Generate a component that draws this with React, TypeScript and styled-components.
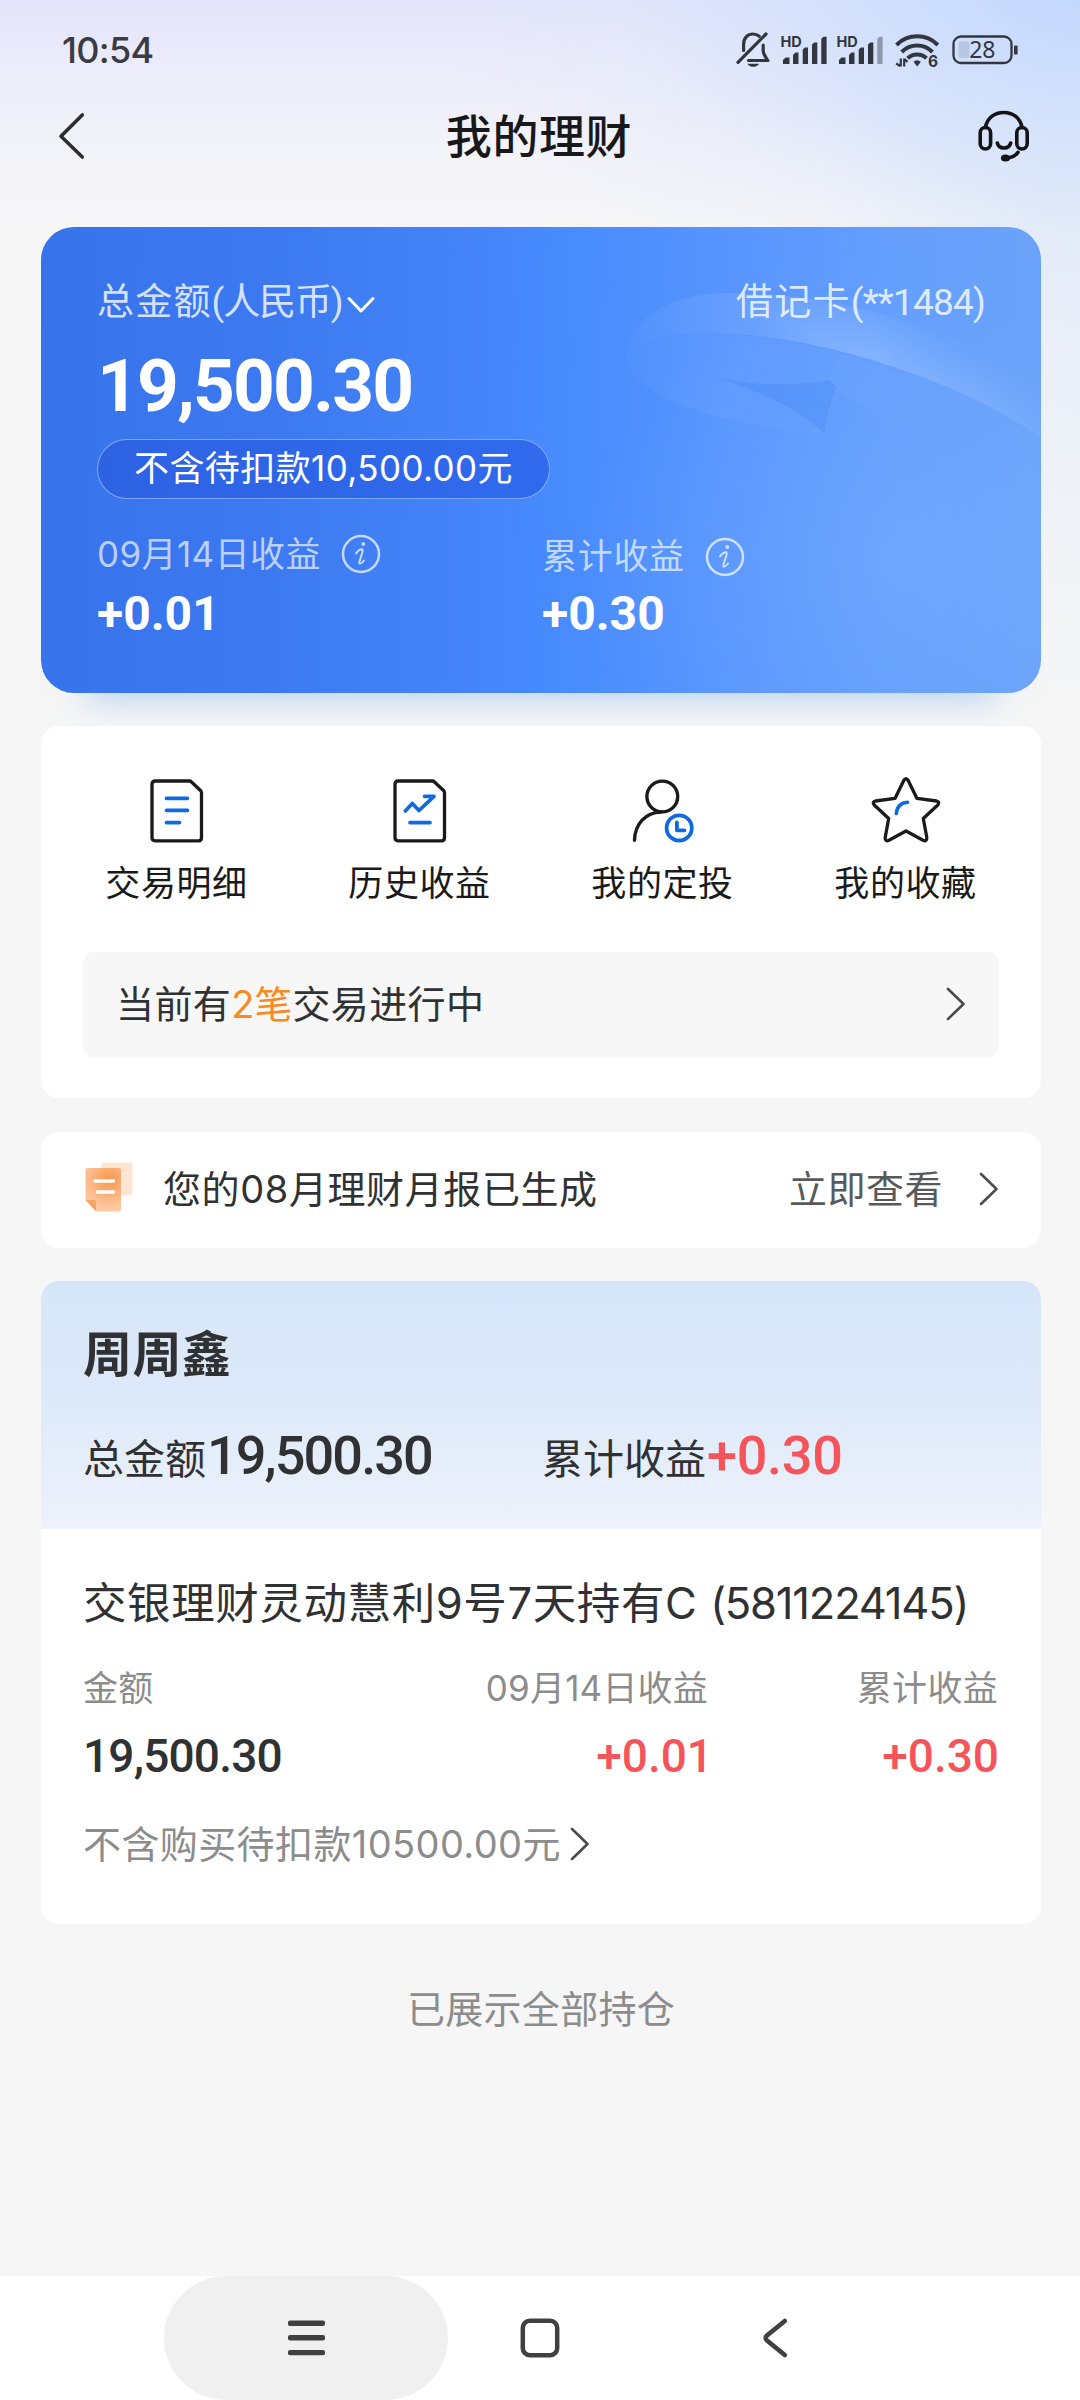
import React from 'react';
import styled, { createGlobalStyle } from 'styled-components';

const GlobalStyle = createGlobalStyle`
  *, *::before, *::after { box-sizing: border-box; }
  body {
    margin: 0;
    background: #f6f6f6;
    font-family: Inter, "Noto Sans CJK SC", sans-serif;
    color: #303133;
  }
  svg { display: block; flex: none; overflow: visible; }
`;

const Page = styled.div`
  width: 1080px;
  height: 2400px;
  display: flex;
  flex-direction: column;
  overflow: hidden;
  background:
    radial-gradient(ellipse 640px 330px at 1080px -10px, rgba(194, 215, 254, 0.95) 0%, rgba(204, 221, 252, 0.72) 35%, rgba(222, 231, 248, 0.35) 72%, rgba(240, 243, 248, 0) 100%),
    radial-gradient(ellipse 260px 620px at 1080px 100px, rgba(222, 232, 249, 0.9) 0%, rgba(246, 246, 248, 0) 100%),
    linear-gradient(180deg, #e3e4fb 0px, #ebebfa 60px, #f2f2f9 140px, #f6f6f8 215px, #f6f6f6 320px);
`;

const Text = styled.span<{
  $size: number;
  $color?: string;
  $weight?: number;
  $spacing?: number;
  $line?: number;
}>`
  font-size: ${p => p.$size}px;
  font-weight: ${p => p.$weight ?? 400};
  letter-spacing: ${p => p.$spacing ?? 0}px;
  line-height: ${p => (p.$line ? `${p.$line}px` : 1)};
  color: ${p => p.$color ?? 'inherit'};
  white-space: nowrap;
`;

const Figures = styled(Text)<{ $hang?: number }>`
  font-family: Roboto, "Noto Sans CJK SC", sans-serif;
  margin-right: ${p => -(p.$hang ?? 0)}px;
`;

/* ---------- status bar and title ---------- */

const StatusBar = styled.div`
  height: 100px;
  padding: 0 62px;
  display: flex;
  align-items: center;
  justify-content: space-between;
  color: #3a3b44;
`;

const StatusIcons = styled.div`
  display: flex;
  align-items: center;
`;

const StatusItem = styled.div<{ $gap: number }>`
  margin-left: ${p => p.$gap}px;
`;

const Header = styled.header`
  height: 72px;
  padding: 0 51px 0 58px;
  display: grid;
  grid-template-columns: 54px 1fr 52px;
  align-items: center;
`;

const PageTitle = styled.div`
  padding-right: 11px;
  padding-bottom: 1px;
  text-align: center;
`;

const BellOff = () => (
  <svg width="34" height="37" viewBox="0 0 34 37" fill="none" stroke="#31363f" strokeWidth="3.2" strokeLinecap="round" strokeLinejoin="round">
    <path d="M2 30.3L30 2" />
    <path d="M7.6 18.5v-6C7.6 6 11.5 2 17 2c2.700 0 4.600.8 6.200 2.200" />
    <path d="M27.200 13.200V19c0 3.500 2.300 5.600 4.600 9.500H12.500" />
    <path d="M11.500 31.700h11.500c-2 4.200-9.500 4.200-11.500 0z" fill="#31363f" stroke="none" />
  </svg>
);

const Signal = ({ weak }: { weak?: boolean }) => (
  <svg width="47" height="30" viewBox="0 0 47 30" fill="#31363f">
    <text x="-0.500" y="11.500" fontSize="14.500" fontWeight="700" fontFamily="Inter, sans-serif">HD</text>
    <path d="M2 29v-4l2.500-2.500h4V29z" />
    <path d="M12 29V20l2.500-2.500h3V29z" />
    <path d="M21.700 29V14.500l2.300-2h3V29z" />
    <path d="M31 29V9.500l2.300-2h3V29z" />
    <path d="M40.300 29V3.800l2.300-2h3V29z" opacity={weak ? 0.42 : 1} />
  </svg>
);

const Wifi = () => (
  <svg width="44" height="35" viewBox="0 0 44 35" fill="none" stroke="#31363f" strokeWidth="4">
    <path d="M1.500 12A29 29 0 0 1 42.800 12" />
    <path d="M6.700 19A21.500 21.500 0 0 1 37.500 19" />
    <path d="M12.700 25.300A13.500 13.500 0 0 1 31.500 25.300" />
    <path d="M18.500 28.800q3.700-3 7.400 0L22.200 33.500z" fill="#31363f" stroke="none" />
    <path d="M5.800 25.500v8M1.200 30.500l4 2.500M9.200 33.500v-8M9.500 26l3 3" strokeWidth="2.200" />
    <text x="33" y="33.500" fontSize="15.500" fontWeight="700" fontFamily="Inter, sans-serif" fill="#31363f" stroke="none">6</text>
  </svg>
);

const Battery = () => (
  <svg width="66" height="30" viewBox="0 0 66 30" fill="none">
    <rect x="1.500" y="1.500" width="58" height="26.500" rx="7.500" stroke="#31363f" strokeWidth="2.300" />
    <rect x="6.500" y="6.500" width="11" height="16.500" rx="2.500" fill="#b7c6e2" />
    <rect x="62" y="10.500" width="3.600" height="9" rx="1" fill="#31363f" />
    <text x="30.300" y="22.800" fontSize="23" textAnchor="middle" fontFamily="Noto Sans, sans-serif" fill="#31363f">28</text>
  </svg>
);

const BackIcon = () => (
  <svg width="27" height="46" viewBox="0 0 27 46" fill="none" stroke="#2d2d30" strokeWidth="3.600" strokeLinecap="round" strokeLinejoin="round">
    <path d="M24.300 2L3 23.200L24.300 44" />
  </svg>
);

const Headset = () => (
  <svg width="52" height="52" viewBox="0 0 52 52" fill="none" stroke="#141416" strokeWidth="3.600" strokeLinecap="round">
    <path d="M8.500 17.500C10 8 17.500 2.500 26.700 2.500S43.500 8 45 17.500" />
    <rect x="3.200" y="17.500" width="10.400" height="21.500" rx="5.200" />
    <rect x="39.800" y="17.500" width="10.400" height="21.500" rx="5.200" />
    <path d="M20.300 33c1.600 6.600 11.800 6.600 13.400 0" />
    <path d="M41 42.300c-1.800 3-5 4.700-9 5.500" />
    <ellipse cx="28.500" cy="48" rx="2.800" ry="1.800" fill="#141416" />
  </svg>
);

/* ---------- balance card ---------- */

const Content = styled.main`
  flex: 1;
  padding: 55px 39px 0 41px;
  display: flex;
  flex-direction: column;
`;

const BalanceCard = styled.section`
  position: relative;
  height: 466px;
  padding: 51px 56px 0 56px;
  border-radius: 33px;
  background:
    radial-gradient(ellipse 330px 260px at 860px 330px, rgba(120, 176, 255, 0.4), rgba(120, 176, 255, 0) 100%),
    linear-gradient(91deg, #3773ea 0%, #3c79f0 22%, #4382f7 40%, #478bfd 52%, #5794fe 68%, #649ffd 84%, #6ba3f9 100%);
  box-shadow: 0 52px 32px -46px rgba(120, 172, 240, 0.5);
  color: #fff;
`;

const CardArt = styled.svg`
  position: absolute;
  left: 0;
  top: 0;
  border-radius: 33px;
`;

const CardBody = styled.div`
  position: relative;
  display: flex;
  flex-direction: column;
  align-items: flex-start;
`;

const CardTop = styled.div`
  width: 100%;
  height: 50px;
  display: flex;
  align-items: center;
  justify-content: space-between;
`;

const Currency = styled.div`
  display: flex;
  align-items: center;
  gap: 4px;
`;

const Amount = styled.div`
  height: 80px;
  margin-top: 18px;
  display: flex;
  align-items: center;
`;

const PendingPill = styled.div`
  width: 453px;
  height: 60px;
  margin-top: 13px;
  display: flex;
  align-items: center;
  justify-content: center;
  padding-bottom: 2px;
  border: 1.500px solid rgba(150, 190, 255, 0.75);
  border-radius: 30px;
  background: linear-gradient(90deg, #2d62e3, #306aed);
`;

const Earnings = styled.div`
  width: 100%;
  margin-top: 30px;
  display: grid;
  grid-template-columns: 445px 1fr;
`;

const EarningLabel = styled.div<{ $shift?: number; $gap: number }>`
  height: 50px;
  display: flex;
  align-items: center;
  gap: ${p => p.$gap}px;
  padding-top: ${p => p.$shift ?? 0}px;
`;

const EarningValue = styled.div`
  height: 60px;
  margin-top: 5px;
  display: flex;
  align-items: center;
`;

const InfoIcon = () => (
  <svg width="40" height="40" viewBox="-20 -20 40 40" fill="none" stroke="#fff" strokeOpacity="0.7" strokeLinecap="round" strokeLinejoin="round">
    <circle r="18" strokeWidth="2.500" />
    <circle cx="2.300" cy="-10" r="1.900" fill="#fff" fillOpacity="0.7" stroke="none" />
    <path d="M-5-0.500C-3.500-3-1.500-4.500 0.500-4.800C2-5 1.800-3.500 1.300-1.500L-1.500 7.500C-2.500 10.500 0 10.500 3 6.500" strokeWidth="2" />
  </svg>
);

const DownIcon = () => (
  <svg width="28" height="18" viewBox="0 0 28 18" fill="none" stroke="#fff" strokeWidth="3" strokeLinecap="round" strokeLinejoin="round">
    <path d="M2 4.500L14 17L26 4.500" />
  </svg>
);

const Orbit = () => (
  <CardArt width="1000" height="466" viewBox="0 0 1000 466">
    <defs>
      <linearGradient id="band" x1="585" y1="0" x2="1000" y2="0" gradientUnits="userSpaceOnUse">
        <stop offset="0" stopColor="#9cc3ff" stopOpacity="0.060" />
        <stop offset="0.300" stopColor="#9cc3ff" stopOpacity="0.240" />
        <stop offset="0.600" stopColor="#a6c9ff" stopOpacity="0.540" />
        <stop offset="0.850" stopColor="#9cc3ff" stopOpacity="0.440" />
        <stop offset="1" stopColor="#9cc3ff" stopOpacity="0.220" />
      </linearGradient>
      <linearGradient id="bandFade" x1="820" y1="65" x2="792" y2="118" gradientUnits="userSpaceOnUse">
        <stop offset="0" stopColor="#fff" stopOpacity="0.080" />
        <stop offset="1" stopColor="#fff" stopOpacity="1" />
      </linearGradient>
      <mask id="bandMask" maskUnits="userSpaceOnUse" x="560" y="40" width="440" height="200">
        <rect x="560" y="40" width="440" height="200" fill="url(#bandFade)" />
      </mask>
      <linearGradient id="disc" x1="600" y1="140" x2="720" y2="190" gradientUnits="userSpaceOnUse">
        <stop offset="0" stopColor="#8db9ff" stopOpacity="0.070" />
        <stop offset="0.700" stopColor="#8db9ff" stopOpacity="0.140" />
        <stop offset="1" stopColor="#8db9ff" stopOpacity="0.080" />
      </linearGradient>
      <linearGradient id="wing" x1="800" y1="150" x2="930" y2="190" gradientUnits="userSpaceOnUse">
        <stop offset="0" stopColor="#8db9ff" stopOpacity="0.110" />
        <stop offset="1" stopColor="#8db9ff" stopOpacity="0" />
      </linearGradient>
    </defs>
    <g mask="url(#bandMask)">
      <path d="M585 130C585 110 605 70 681 66C790 64 920 100 1000 160V211C940 165 790 106 666 106C625 106 600 110 585 130Z" fill="url(#band)" />
    </g>
    <path d="M585 130C600 106 640 104 680 107C725 109 760 115 800 127L788 153C750 160 710 159 675 150C720 165 755 180 783 206C730 205 590 180 585 130Z" fill="url(#disc)" />
    <path d="M788 153L800 127C860 146 920 170 960 192C940 200 910 208 885 206C845 195 815 178 795 160Z" fill="url(#wing)" />
    <path d="M675 150C710 159 750 160 788 153L795 160C789 174 786 190 783 206C755 180 720 165 675 150Z" fill="#4f90f8" fillOpacity="0.500" />
  </CardArt>
);

/* ---------- white cards ---------- */

const Card = styled.section<{ $height: number; $top: number }>`
  position: relative;
  height: ${p => p.$height}px;
  margin-top: ${p => p.$top}px;
  border-radius: 18px;
  background: #fff;
  overflow: hidden;
`;

const Shortcuts = styled.div`
  display: grid;
  grid-template-columns: repeat(4, 243px);
  padding: 49px 0 0 14px;
`;

const Shortcut = styled.div`
  display: flex;
  flex-direction: column;
  align-items: center;
`;

const ShortcutIcon = styled.div`
  height: 72px;
  display: flex;
  align-items: center;
  margin-bottom: 14px;
`;

const Notice = styled.div`
  height: 105px;
  margin: 47px 42px 0;
  padding: 0 33px 1px 33px;
  display: flex;
  align-items: center;
  justify-content: space-between;
  border-radius: 11px;
  background: #f7f7f7;
`;

const ReportRow = styled.div`
  height: 100%;
  padding: 0 42px 2px 44px;
  display: flex;
  align-items: center;
`;

const ReportText = styled.div`
  flex: 1;
  display: flex;
  padding-left: 30px;
`;

const ReportAction = styled.div`
  display: flex;
  align-items: center;
  gap: 36px;
`;

const RightIcon = () => (
  <svg width="20" height="34" viewBox="0 0 20 34" fill="none" stroke="#4c4c4c" strokeWidth="2.600" strokeLinecap="round" strokeLinejoin="round">
    <path d="M2 2L17.500 17L2 32" />
  </svg>
);

const INK = '#1a1a1a';
const BLUE = '#0f6adf';
const SHEET = 'M5 2H39.500Q40.500 2 41.500 3L50.500 11.500Q51.500 12.500 51.500 14V58.500Q51.500 61.800 48.500 61.800H5Q2 61.800 2 58.500V5.200Q2 2 5 2Z';

const DetailsIcon = () => (
  <svg width="54" height="64" viewBox="0 0 54 64" fill="none" strokeLinecap="round" strokeLinejoin="round">
    <path d={SHEET} stroke={INK} strokeWidth="3.300" />
    <path d="M16.500 19.300H37.500M16.500 31.300H37.500M16.500 43.600H29.500" stroke={BLUE} strokeWidth="3.700" />
  </svg>
);

const HistoryIcon = () => (
  <svg width="54" height="64" viewBox="0 0 54 64" fill="none" strokeLinecap="round" strokeLinejoin="round">
    <path d={SHEET} stroke={INK} strokeWidth="3.300" />
    <path d="M12.300 32L19.300 24.500L26 31.500L41 17.300H31.500M17 43.600H37" stroke={BLUE} strokeWidth="3.700" />
  </svg>
);

const PlanIcon = () => (
  <svg width="62" height="64" viewBox="0 0 62 64" fill="none" strokeLinecap="round" strokeLinejoin="round">
    <g stroke={INK} strokeWidth="3.400">
      <circle cx="30.300" cy="17.500" r="15.400" />
      <path d="M2.500 61.200C3 45 13.500 33.500 29 33" />
    </g>
    <g stroke={BLUE} strokeWidth="3.800">
      <circle cx="47.200" cy="48.900" r="12.600" />
      <path d="M44.900 43.500V51.300H52.500" />
    </g>
  </svg>
);

const FavoriteIcon = () => (
  <svg width="68" height="68" viewBox="0 0 68 68" fill="none" strokeLinecap="round" strokeLinejoin="round" strokeWidth="3.300">
    <path
      d="M31.800 3.500Q34 0 36.200 3.500L45 21.400L64.500 24Q68.500 25 65.500 28.300L51.300 41.500L54.800 60.500Q55 65 51 63.300L34 54L17 63.300Q13 65 13.200 60.500L16.700 41.500L2.500 28.300Q-0.500 25 3.500 24L23 21.400Z"
      stroke={INK}
    />
    <path d="M35.500 25.300Q25.500 26 24.300 36.500" stroke={BLUE} strokeWidth="3.600" />
  </svg>
);

const ReportIcon = () => (
  <svg width="48" height="55" viewBox="0 0 48 55" fill="none">
    <defs>
      <radialGradient id="sheet" cx="24" cy="18" r="30" gradientUnits="userSpaceOnUse">
        <stop offset="0" stopColor="#f99549" />
        <stop offset="0.500" stopColor="#fbb27b" />
        <stop offset="1" stopColor="#fccaa4" />
      </radialGradient>
    </defs>
    <rect x="16.500" y="0.500" width="31" height="33" rx="2" fill="#fde5d4" />
    <path d="M2.500 6H34Q36 6 36 8V47.500Q36 49.500 34 49.500H11L0.500 38V8Q0.500 6 2.500 6Z" fill="url(#sheet)" />
    <path d="M0.500 38H9Q11 38 11 40V49.500Z" fill="#f9a566" />
    <path d="M10 19H28.500M12.500 30H28.500" stroke="#fff" strokeWidth="3.600" strokeLinecap="round" />
  </svg>
);

const shortcuts = [
  { label: '交易明细', Icon: DetailsIcon },
  { label: '历史收益', Icon: HistoryIcon },
  { label: '我的定投', Icon: PlanIcon },
  { label: '我的收藏', Icon: FavoriteIcon },
];

/* ---------- holdings ---------- */

const HoldingHead = styled.div`
  height: 248px;
  padding: 43px 42px 0;
  background: linear-gradient(180deg, #d6e6fa 0%, #dde9f9 45%, #edf2fb 100%);
`;

const HoldingTotals = styled.div`
  margin-top: 42px;
  display: grid;
  grid-template-columns: 459px 1fr;
`;

const Total = styled.div`
  height: 60px;
  display: flex;
  align-items: baseline;
  gap: 1px;
`;

const HoldingTitle = styled.div`
  height: 60px;
  display: flex;
  align-items: center;
`;

const HoldingBody = styled.div`
  padding: 45px 43px 0 42px;
`;

const Columns = styled.div`
  margin-top: 34px;
  display: grid;
  grid-template-columns: 302px 323px 1fr;
`;

const Column = styled.div<{ $end?: boolean }>`
  display: flex;
  flex-direction: column;
  align-items: ${p => (p.$end ? 'flex-end' : 'flex-start')};
  gap: 26px;
`;

const Pending = styled.div`
  height: 50px;
  margin-top: 41px;
  display: flex;
  align-items: center;
  gap: 9px;
`;

const EndNote = styled.div`
  margin-top: 64px;
  height: 42px;
  text-align: center;
`;

/* ---------- system navigation ---------- */

const NavBar = styled.nav`
  height: 124px;
  padding-left: 164px;
  display: flex;
  background: #fff;
`;

const NavKey = styled.div<{ $width: number; $active?: boolean }>`
  width: ${p => p.$width}px;
  display: flex;
  align-items: center;
  justify-content: center;
  border-radius: 62px;
  background: ${p => (p.$active ? '#f0f0f0' : 'transparent')};
`;

const GRAY = '#8c8c8c';
const RED = '#f5555a';
const SOFT_WHITE = 'rgba(255,255,255,0.8)';
const FAINT_WHITE = 'rgba(255,255,255,0.66)';

export default function App() {
  return (
    <Page>
      <GlobalStyle />
      <StatusBar>
        <Text $size={36} $weight={500} $spacing={-0.7}>10:54</Text>
        <StatusIcons>
          <StatusItem $gap={0}><BellOff /></StatusItem>
          <StatusItem $gap={11}><Signal /></StatusItem>
          <StatusItem $gap={9}><Signal weak /></StatusItem>
          <StatusItem $gap={11}><Wifi /></StatusItem>
          <StatusItem $gap={13}><Battery /></StatusItem>
        </StatusIcons>
      </StatusBar>
      <Header>
        <BackIcon />
        <PageTitle>
          <Text $size={46} $weight={500} $spacing={0.6} $color="#18181a">我的理财</Text>
        </PageTitle>
        <Headset />
      </Header>

      <Content>
        <BalanceCard>
          <Orbit />
          <CardBody>
            <CardTop>
              <Currency>
                <Figures $size={37} $spacing={-1.1} $line={50} $color={SOFT_WHITE}>
                  <Text $size={37} $spacing={1.2}>总金额</Text>(人民币)
                </Figures>
                <DownIcon />
              </Currency>
              <Figures $size={37} $spacing={-0.8} $line={50} $color={SOFT_WHITE}>
                <Text $size={37} $spacing={1.3}>借记卡</Text>(**1484)
              </Figures>
            </CardTop>
            <Amount>
              <Figures $size={73} $weight={700} $spacing={-1.9}>19,500.30</Figures>
            </Amount>
            <PendingPill>
              <Text $size={35} $spacing={0.4}>不含待扣款10,500.00元</Text>
            </PendingPill>
            <Earnings>
              <div>
                <EarningLabel $gap={20}>
                  <Text $size={35} $spacing={0.4} $color={FAINT_WHITE}>09月14日收益</Text>
                  <InfoIcon />
                </EarningLabel>
                <EarningValue><Figures $size={48} $weight={700}>+0.01</Figures></EarningValue>
              </div>
              <div>
                <EarningLabel $gap={20} $shift={5}>
                  <Text $size={35} $spacing={0.7} $color={FAINT_WHITE}>累计收益</Text>
                  <InfoIcon />
                </EarningLabel>
                <EarningValue><Figures $size={48} $weight={700}>+0.30</Figures></EarningValue>
              </div>
            </Earnings>
          </CardBody>
        </BalanceCard>

        <Card $height={372} $top={33}>
          <Shortcuts>
            {shortcuts.map(({ label, Icon }) => (
              <Shortcut key={label}>
                <ShortcutIcon><Icon /></ShortcutIcon>
                <Text $size={35} $spacing={0.6} $line={44} $color="#1a1a1a">{label}</Text>
              </Shortcut>
            ))}
          </Shortcuts>
          <Notice>
            <Text $size={38} $spacing={0.4}>
              当前有<Text $size={38} $spacing={0} $color="#fb8a1e">2笔</Text>交易进行中
            </Text>
            <RightIcon />
          </Notice>
        </Card>

        <Card $height={116} $top={34}>
          <ReportRow>
            <ReportIcon />
            <ReportText><Text $size={38} $spacing={0.6}>您的08月理财月报已生成</Text></ReportText>
            <ReportAction>
              <Text $size={38} $spacing={0.5} $color="#58595b">立即查看</Text>
              <RightIcon />
            </ReportAction>
          </ReportRow>
        </Card>

        <Card $height={643} $top={33}>
          <HoldingHead>
            <HoldingTitle><Text $size={49} $weight={700} $spacing={0.4}>周周鑫</Text></HoldingTitle>
            <HoldingTotals>
              <Total>
                <Text $size={41}>总金额</Text>
                <Figures $size={54} $weight={500} $line={60} $spacing={-1.9}>19,500.30</Figures>
              </Total>
              <Total>
                <Text $size={41}>累计收益</Text>
                <Figures $size={54} $weight={500} $line={60} $spacing={-0.3} $color={RED}>+0.30</Figures>
              </Total>
            </HoldingTotals>
          </HoldingHead>
          <HoldingBody>
            <HoldingTitle>
              <Text $size={43.5} $spacing={0.6}>
                交银理财灵动慧利9号7天持有C <Text $size={43.5} $spacing={-1.2}>(5811224145)</Text>
              </Text>
            </HoldingTitle>
            <Columns>
              <Column>
                <Text $size={35} $spacing={0.3} $line={40} $color={GRAY}>金额</Text>
                <Figures $size={46} $line={44} $weight={500} $spacing={-0.8}>19,500.30</Figures>
              </Column>
              <Column $end>
                <Text $size={35} $spacing={0.2} $line={40} $color={GRAY}>09月14日收益</Text>
                <Figures $size={46} $line={44} $weight={500} $hang={5} $color={RED}>+0.01</Figures>
              </Column>
              <Column $end>
                <Text $size={35} $spacing={0.3} $line={40} $color={GRAY}>累计收益</Text>
                <Figures $size={46} $line={44} $weight={500} $hang={1} $color={RED}>+0.30</Figures>
              </Column>
            </Columns>
            <Pending>
              <Text $size={38} $spacing={0.4} $color={GRAY}>不含购买待扣款10500.00元</Text>
              <RightIcon />
            </Pending>
          </HoldingBody>
        </Card>

        <EndNote><Text $size={38} $line={42} $spacing={0.3} $color={GRAY}>已展示全部持仓</Text></EndNote>
      </Content>

      <NavBar>
        <NavKey $width={284} $active>
          <svg width="37" height="36" viewBox="0 0 37 36" fill="#404040">
            <rect width="37" height="5.400" rx="2" y="0.500" />
            <rect width="37" height="5.400" rx="2" y="15.100" />
            <rect width="37" height="5.400" rx="2" y="29.900" />
          </svg>
        </NavKey>
        <NavKey $width={184}>
          <svg width="40" height="40" viewBox="0 0 40 40" fill="none">
            <rect x="2.800" y="2.800" width="34.400" height="34.400" rx="7" stroke="#404040" strokeWidth="4.500" />
          </svg>
        </NavKey>
        <NavKey $width={286}>
          <svg width="26" height="40" viewBox="0 0 26 40" fill="none" stroke="#404040" strokeWidth="4.600" strokeLinecap="round">
            <path d="M22.800 3L5 17.500Q2.300 20 5 22.500L22.800 37" />
          </svg>
        </NavKey>
      </NavBar>
    </Page>
  );
}
